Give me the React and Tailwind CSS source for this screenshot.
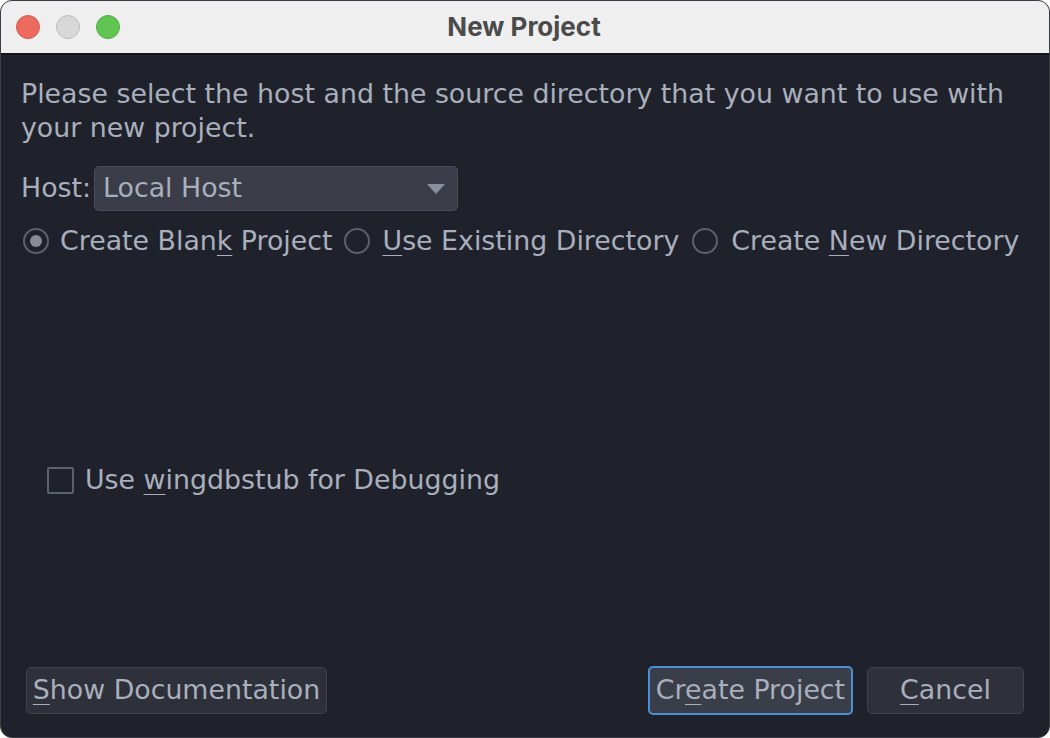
import React from "react";

const font = { fontFamily: '"DejaVu Sans", "Noto Sans", sans-serif' };

function U({ children }) {
  return <span className="underline decoration-1 underline-offset-[5px]">{children}</span>;
}

function Radio({ checked }) {
  return (
    <span className="w-[26px] h-[26px] rounded-full border-2 border-[#5b616d] flex items-center justify-center shrink-0">
      {checked && <span className="w-[12px] h-[12px] rounded-full bg-[#868b96]" />}
    </span>
  );
}

export default function App() {
  return (
    <div className="w-[1050px] h-[738px] bg-white">
      <div className="w-full h-full rounded-[12px] overflow-hidden flex flex-col bg-[#1f222a] border border-[#3a3d44]">
        <div className="h-[54px] bg-[#efefef] border-b-2 border-[#121418] relative flex items-center justify-center shrink-0">
          <div className="absolute left-[15px] top-[14px] flex gap-[16px]">
            <span className="w-[24px] h-[24px] rounded-full bg-[#ec6a5e] border border-[#d65a4f]" />
            <span className="w-[24px] h-[24px] rounded-full bg-[#d8d8d8] border border-[#bdbdbd]" />
            <span className="w-[24px] h-[24px] rounded-full bg-[#61c554] border border-[#51ad44]" />
          </div>
          <span className="text-[26px] font-bold text-[#4b4b4b] mt-[-2px] ml-[-2px]" style={{ fontFamily: 'Inter, "Liberation Sans", sans-serif' }}>New Project</span>
        </div>
        <div className="flex-1 flex flex-col pl-[20px] pr-[10px] text-[#a9afbd] text-[26.8px]" style={font}>
          <p className="leading-[34px] mt-[22px]">Please select the host and the source directory that you want to use with your new project.</p>
          <div className="flex items-center mt-[21px] gap-[3px]">
            <span>Host:</span>
            <div className="w-[364px] h-[45px] rounded-[5px] bg-[#3a3d47] border border-[#4b4e58] flex items-center justify-between pl-[8px] pr-[12px]">
              <span>Local Host</span>
              <svg width="18" height="10" viewBox="0 0 18 10"><path d="M0 0 L18 0 L9 10 Z" fill="#8a8f9b" /></svg>
            </div>
          </div>
          <div className="flex items-center mt-[9px] h-[42px]">
            <label className="flex items-center gap-[11px] pl-[2px]"><Radio checked /><span>Create Blan<U>k</U> Project</span></label>
            <label className="flex items-center gap-[13px] ml-[11px]"><Radio /><span><U>U</U>se Existing Directory</span></label>
            <label className="flex items-center gap-[13px] ml-[13px]"><Radio /><span>Create <U>N</U>ew Directory</span></label>
          </div>
          <div className="flex items-center gap-[11px] ml-[26px] mt-[198px]">
            <span className="w-[27px] h-[27px] border-2 border-[#5b616d] rounded-[2px] shrink-0" />
            <span>Use <U>w</U>ingdbstub for Debugging</span>
          </div>
          <div className="flex-1" />
          <div className="flex items-center mb-[22px] ml-[5px] mr-[15px]">
            <button className="h-[47px] w-[301px] rounded-[5px] bg-[#2e3139] border border-[#3f424b] text-[#a9afbd] whitespace-nowrap"><U>S</U>how Documentation</button>
            <div className="flex-1" />
            <button className="h-[49px] w-[205px] rounded-[5px] bg-[#3a3e48] border-2 border-[#4a90d9] text-[#a9afbd] whitespace-nowrap">Cr<U>e</U>ate Project</button>
            <button className="h-[47px] w-[157px] ml-[14px] rounded-[5px] bg-[#2e3139] border border-[#3f424b] text-[#a9afbd]"><U>C</U>ancel</button>
          </div>
        </div>
      </div>
    </div>
  );
}
